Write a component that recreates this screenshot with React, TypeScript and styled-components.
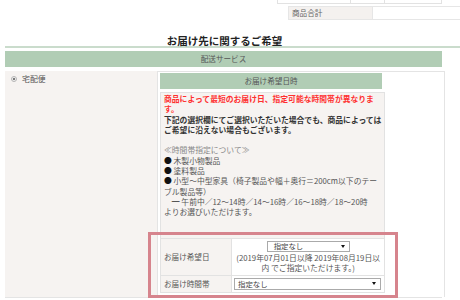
import React from "react";
import styled, { createGlobalStyle } from "styled-components";

// style
const GlobalStyle = createGlobalStyle`
  body {
    margin: 0;
    background: #fff;
    font-family: "Noto Sans CJK JP", "Noto Sans", sans-serif;
    color: #555;
  }
`;

const Page = styled.div`
  width: 460px;
  height: 300px;
  overflow: hidden;
  padding-left: 5px;
  box-sizing: border-box;
  font-size: 7.6px;
`;

const TopStub = styled.div`
  display: flex;
  margin-left: 272px;
  width: 165px;
  height: 3px;
  border-bottom: 1px solid #e2e2e2;
`;

const StubCell = styled.div<{ $w: number; $last?: boolean }>`
  width: ${(p) => p.$w}px;
  border-left: 1px solid #e2e2e2;
  border-right: ${(p) => (p.$last ? "1px solid #e2e2e2" : "none")};
`;

const SummaryRow = styled.div`
  display: flex;
  margin-top: 2px;
  margin-left: 283px;
  height: 14px;
`;

const SummaryLabel = styled.div`
  width: 85px;
  flex-shrink: 0;
  background: #f4f1ef;
  border: 1px solid #e6e6e6;
  padding-left: 3px;
  line-height: 12px;
  color: #666;
  box-sizing: border-box;
`;

const SummaryValue = styled.div`
  width: 120px;
  flex-shrink: 0;
  border: 1px solid #e6e6e6;
  border-left: none;
  box-sizing: border-box;
`;

const Heading = styled.h2`
  margin: 16px 0 0;
  width: 455px;
  padding-right: 16px;
  box-sizing: border-box;
  text-align: center;
  font-size: 10.5px;
  line-height: 10px;
  font-weight: bold;
  color: #222;
  border-bottom: 2px solid #cadccc;
`;

const GreenBar = styled.div<{ $w?: number }>`
  width: ${(p) => (p.$w ? `${p.$w}px` : "437px")};
  height: 16px;
  line-height: 16px;
  background: #b1cdb5;
  text-align: center;
  color: #555;
`;

const SectionBar = styled(GreenBar)`
  margin-top: 3px;
`;

const DeliveryRow = styled.div`
  display: flex;
  width: 437px;
  height: 227px;
  margin-top: 4px;
  border-bottom: 1px solid #e4e4e4;
  box-sizing: border-box;
`;

const ServiceCell = styled.div`
  width: 152px;
  flex-shrink: 0;
  background: #f6f3f1;
  padding: 3px 0 0 6px;
  box-sizing: border-box;
  display: flex;
  align-items: flex-start;
  gap: 5px;
  line-height: 10px;
  font-size: 7.9px;
`;

const Radio = styled.span`
  margin-top: 2px;
  width: 6px;
  height: 6px;
  border-radius: 50%;
  border: 1px solid #b5b5b5;
  background: #eee;
  box-sizing: border-box;
  display: flex;
  align-items: center;
  justify-content: center;

  &::after {
    content: "";
    width: 2px;
    height: 2px;
    border-radius: 50%;
    background: #555;
  }
`;

const DetailCell = styled.div`
  flex: 1;
  background: #fff;
  border: 1px solid #e4e4e4;
  border-bottom: none;
  padding: 1px 59px 0 2px;
  box-sizing: border-box;
`;

const NoticeBox = styled.div`
  margin-top: 3px;
  border: 1px solid #e2e2e2;
  background: #f6f3f1;
  padding-top: 1px;
`;

const NoticeText = styled.div`
  padding: 0 3px;
  line-height: 10.3px;
  font-size: 7.8px;
`;

const Line = styled.div<{ $tone?: "red" | "dark" | "muted" }>`
  white-space: nowrap;
  font-weight: ${(p) => (p.$tone === "red" || p.$tone === "dark" ? "bold" : "normal")};
  color: ${(p) =>
    p.$tone === "red" ? "#ff3030" : p.$tone === "dark" ? "#333" : p.$tone === "muted" ? "#888" : "#555"};
  min-height: 10.3px;
`;

const Dot = styled.span`
  color: #111;
`;

const DateTable = styled.div`
  position: relative;
  margin-top: 20px;
  border-top: 1px solid #e2e2e2;
`;

const DateRow = styled.div<{ $h: number; $first?: boolean }>`
  display: flex;
  height: ${(p) => p.$h}px;
  border-top: ${(p) => (p.$first ? "none" : "1px solid #e2e2e2")};
`;

const DateLabel = styled.div`
  width: 70px;
  flex-shrink: 0;
  padding-left: 3px;
  display: flex;
  align-items: center;
  box-sizing: border-box;
  color: #555;
`;

const DateValue = styled.div<{ $center?: boolean }>`
  flex: 1;
  background: #fff;
  border-left: 1px solid #e2e2e2;
  display: flex;
  flex-direction: column;
  align-items: ${(p) => (p.$center ? "center" : "stretch")};
  justify-content: ${(p) => (p.$center ? "flex-start" : "center")};
  padding: ${(p) => (p.$center ? "2px 0 0" : "0 3px 0 2px")};
  line-height: 10px;
  text-align: center;
`;

const FakeSelect = styled.div<{ $w?: number; $h: number }>`
  width: ${(p) => (p.$w ? `${p.$w}px` : "auto")};
  height: ${(p) => p.$h}px;
  border: 1px solid #aaa;
  background: #fff;
  box-sizing: border-box;
  display: flex;
  align-items: center;
  justify-content: space-between;
  padding: 0 4px 0 3px;
  color: #444;
  font-size: 7.4px;
`;

const Caret = styled.span`
  width: 0;
  height: 0;
  border-left: 2px solid transparent;
  border-right: 2px solid transparent;
  border-top: 3px solid #111;
`;

const Hint = styled.div`
  margin-top: 1px;
  color: #555;
  font-size: 7.8px;
`;

const Highlight = styled.div`
  position: absolute;
  top: -7px;
  left: -13px;
  width: 250px;
  height: 66px;
  border: 3px solid #d6848d;
  box-sizing: border-box;
  pointer-events: none;
`;

const App = () => {
  return (
    <>
      <GlobalStyle />
      <Page>
        <TopStub>
          <StubCell $w={74} />
          <StubCell $w={34} />
          <StubCell $w={57} $last />
        </TopStub>
        <SummaryRow>
          <SummaryLabel>商品合計</SummaryLabel>
          <SummaryValue />
        </SummaryRow>

        <Heading>お届け先に関するご希望</Heading>
        <SectionBar>配送サービス</SectionBar>

        <DeliveryRow>
          <ServiceCell>
            <Radio />
            <span>宅配便</span>
          </ServiceCell>
          <DetailCell>
            <GreenBar $w={222}>お届け希望日時</GreenBar>
            <NoticeBox>
              <NoticeText>
                <Line $tone="red">商品によって最短のお届け日、指定可能な時間帯が異なりま</Line>
                <Line $tone="red">す。</Line>
                <Line $tone="dark">下記の選択欄にてご選択いただいた場合でも、商品によっては</Line>
                <Line $tone="dark">ご希望に沿えない場合もございます。</Line>
                <Line />
                <Line $tone="muted">≪時間帯指定について≫</Line>
                <Line>
                  <Dot>●</Dot> 木製小物製品
                </Line>
                <Line>
                  <Dot>●</Dot> 塗料製品
                </Line>
                <Line>
                  <Dot>●</Dot> 小型～中型家具（椅子製品や幅＋奥行＝200cm以下のテー
                </Line>
                <Line>ブル製品等）</Line>
                <Line>　━ 午前中／12～14時／14～16時／16～18時／18～20時</Line>
                <Line>よりお選びいただけます。</Line>
              </NoticeText>

              <DateTable>
                <DateRow $h={36} $first>
                  <DateLabel>お届け希望日</DateLabel>
                  <DateValue $center>
                    <FakeSelect $w={83} $h={11}>
                      <span style={{ paddingLeft: 3 }}>指定なし</span>
                      <Caret />
                    </FakeSelect>
                    <Hint>
                      (2019年07月01日以降 2019年08月19日以
                      <br />
                      内 でご指定いただけます。)
                    </Hint>
                  </DateValue>
                </DateRow>
                <DateRow $h={16}>
                  <DateLabel>お届け時間帯</DateLabel>
                  <DateValue>
                    <FakeSelect $h={12}>
                      <span>指定なし</span>
                      <Caret />
                    </FakeSelect>
                  </DateValue>
                </DateRow>
                <Highlight />
              </DateTable>
            </NoticeBox>
          </DetailCell>
        </DeliveryRow>
      </Page>
    </>
  );
};

export default App;
